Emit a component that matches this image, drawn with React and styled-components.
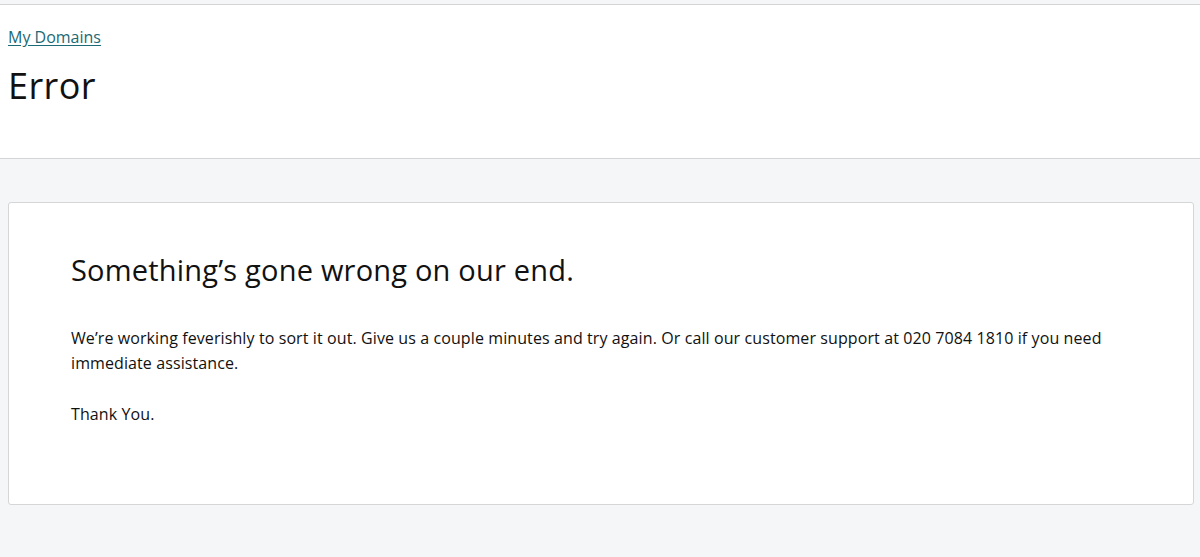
import styled, { createGlobalStyle } from "styled-components";

const Global = createGlobalStyle`
  html, body {
    margin: 0;
    padding: 0;
    background: #f5f6f8;
  }
  body {
    font-family: "Open Sans", "Liberation Sans", sans-serif;
    color: #111;
  }
`;

const Page = styled.div`
  min-height: 557px;
  background: #f5f6f8;
`;

const Header = styled.header`
  background: #fff;
  border-top: 1px solid #d4d4d4;
  margin-top: 4px;
  border-bottom: 1px solid #d4d4d4;
  padding: 21px 8px 0;
  height: 132px;
`;

const Crumb = styled.a`
  color: #1b6a75;
  font-size: 16px;
  text-decoration: underline;
  text-underline-offset: 2px;
  line-height: 20px;
`;

const Title = styled.h1`
  margin: 16px 0 0;
  font-size: 36px;
  font-weight: 400;
  line-height: 44px;
  letter-spacing: 0.4px;
`;

const Body = styled.main`
  padding: 43px 6px 52px 8px;
`;

const Card = styled.section`
  background: #fff;
  border: 1px solid #d6d6d6;
  border-radius: 3px;
  padding: 49px 62px 77px;
`;

const Heading = styled.h2`
  margin: 0 0 38px;
  font-size: 29px;
  font-weight: 400;
  line-height: 36px;
  letter-spacing: 0.2px;
`;

const Text = styled.p`
  margin: 0 0 26px;
  font-size: 16px;
  line-height: 25px;
  letter-spacing: 0.1px;
  &:last-child {
    margin-bottom: 0;
  }
`;

export default function App() {
  return (
    <Page>
      <Global />
      <Header>
        <Crumb href="#">My Domains</Crumb>
        <Title>Error</Title>
      </Header>
      <Body>
        <Card>
          <Heading>Something’s gone wrong on our end.</Heading>
          <Text>
            We’re working feverishly to sort it out. Give us a couple minutes and try again. Or
            call our customer support at 020 7084 1810 if you need immediate assistance.
          </Text>
          <Text>Thank You.</Text>
        </Card>
      </Body>
    </Page>
  );
}
